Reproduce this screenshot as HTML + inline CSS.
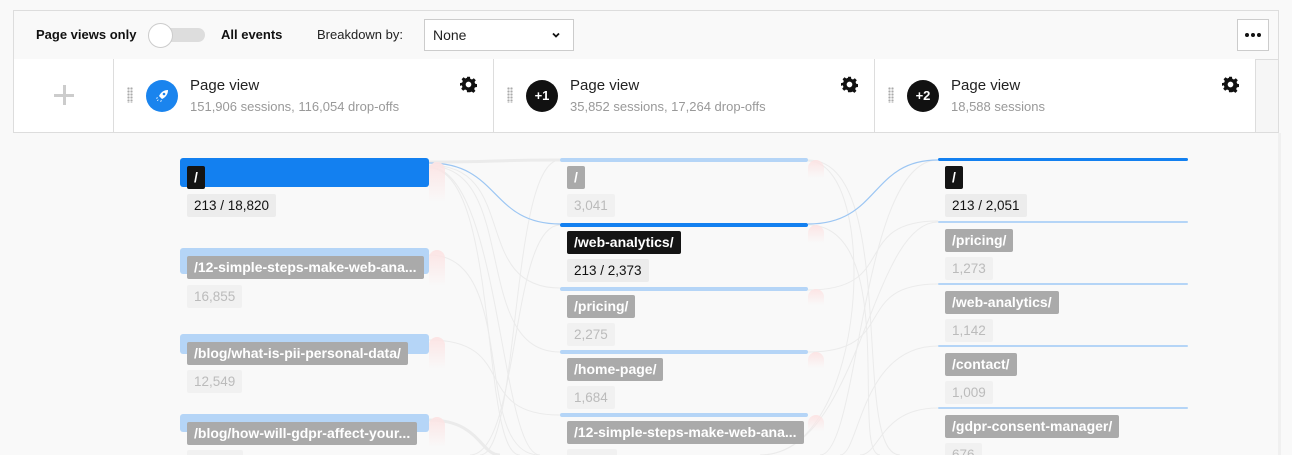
<!DOCTYPE html>
<html><head><meta charset="utf-8"><style>
*{margin:0;padding:0;box-sizing:border-box}
html,body{width:1292px;height:455px;overflow:hidden}
body{background:#f9f9f9;font-family:"Liberation Sans",sans-serif;position:relative}
.a{position:absolute}
.bar{position:absolute;border-radius:3px}
.lbl{position:absolute;height:23px;line-height:23px;padding:0 7px;border-radius:2px;font-size:14px;font-weight:bold;color:#fff;background:#aaa;white-space:nowrap}
.blk{background:#141414}
.cnt{position:absolute;height:23px;line-height:23px;padding:0 7px;font-size:13.5px;color:#bbb;background:#f1f1f1;border-radius:2px}
.cnt.d{color:#111;background:#ececec}
.red{position:absolute;width:16px;border-radius:8px 8px 0 0;background:linear-gradient(#fce4e4,rgba(250,240,240,0))}
.cell{position:absolute;top:59px;height:73px;background:#fff;border-right:1px solid #ddd}
.t{position:absolute;font-size:15px;color:#222}
.s{position:absolute;font-size:13px;color:#999}
.grip{position:absolute;width:6px;height:16px;background:radial-gradient(circle,#aaa 1px,transparent 1.3px) 0 0/3px 3px}
.gear{position:absolute;width:17px;height:17px}
.circ{position:absolute;width:32px;height:32px;border-radius:50%;background:#111;color:#fff;font-size:13px;font-weight:bold;text-align:center;line-height:32px}
</style></head><body>
<div class="a" style="left:13px;top:10px;width:1266px;height:123px;border:1px solid #ddd;background:#f9f9f9"></div>
<div class="a" style="left:36px;top:27px;font-size:13px;font-weight:bold;color:#111">Page views only</div>
<div class="a" style="left:150px;top:28px;width:55px;height:14px;border-radius:7px;background:#ddd"></div>
<div class="a" style="left:148px;top:23px;width:25px;height:25px;border-radius:50%;background:#fff;border:1px solid #ccc"></div>
<div class="a" style="left:221px;top:27px;font-size:13px;font-weight:bold;color:#111">All events</div>
<div class="a" style="left:317px;top:27px;font-size:13px;color:#222">Breakdown by:</div>
<div class="a" style="left:424px;top:19px;width:150px;height:32px;border:1px solid #ccc;background:#fff;font-size:14px;color:#222;line-height:30px;padding-left:8px">None</div>
<svg class="a" style="left:552px;top:31px" width="8" height="8" viewBox="0 0 8 8"><path d="M1 2.5L4 5.5 7 2.5" fill="none" stroke="#111" stroke-width="1.8"/></svg>
<div class="a" style="left:1237px;top:19px;width:32px;height:32px;border:1px solid #ccc;background:#fff"></div>
<div class="a" style="left:1245px;top:33px;width:4px;height:4px;border-radius:50%;background:#111"></div>
<div class="a" style="left:1251px;top:33px;width:4px;height:4px;border-radius:50%;background:#111"></div>
<div class="a" style="left:1257px;top:33px;width:4px;height:4px;border-radius:50%;background:#111"></div>
<div class="a" style="left:14px;top:59px;width:1265px;height:1px;background:#ddd"></div>
<div class="cell" style="left:14px;width:100px"><div class="a" style="left:40px;top:35px;width:20px;height:3px;background:#ccc"></div><div class="a" style="left:48.5px;top:26px;width:3px;height:20px;background:#ccc"></div></div>
<div class="cell" style="left:114px;width:380px"></div>
<div class="cell" style="left:494px;width:381px"></div>
<div class="cell" style="left:875px;width:381px"></div>
<div class="a" style="left:1256px;top:60px;width:22px;height:72px;background:#f6f6f6"></div>
<div class="a" style="left:1278px;top:133px;width:3px;height:322px;background:#f0f0f0"></div>

<div class="grip" style="left:127px;top:87px"></div>
<div class="a" style="left:146px;top:80px;width:32px;height:32px;border-radius:50%;background:#1a84ee"></div>
<svg class="a" style="left:152px;top:86px" width="20" height="20" viewBox="0 0 20 20"><path d="M16 4c-4 0-7 2-9 6l3 3c4-2 6-5 6-9z M6 11l-2 1 1 1z M9 14l-1 2 2-1z M5 15c0-1 1-2 2-1-1 0-1 1-2 1z" fill="#fff"/><circle cx="12" cy="8" r="1.3" fill="#1a84ee"/></svg>
<div class="t" style="left:190px;top:77px">Page view</div>
<div class="s" style="left:190px;top:99px">151,906 sessions, 116,054 drop-offs</div>
<div class="grip" style="left:507px;top:87px"></div>
<div class="circ" style="left:526px;top:80px">+1</div>
<div class="t" style="left:570px;top:77px">Page view</div>
<div class="s" style="left:570px;top:99px">35,852 sessions, 17,264 drop-offs</div>
<div class="grip" style="left:888px;top:87px"></div>
<div class="circ" style="left:907px;top:80px">+2</div>
<div class="t" style="left:951px;top:77px">Page view</div>
<div class="s" style="left:951px;top:99px">18,588 sessions</div>
<svg class="gear" style="left:460px;top:76px" viewBox="0 0 24 24"><path fill="#111" d="M10 1h4l.6 3 2.4 1 2.5-1.8 2.8 2.8L20.5 8.5l1 2.4 2.5.6v4l-3 .6-1 2.4 1.8 2.5-2.8 2.8-2.5-1.8-2.4 1L14 23h-4l-.6-3-2.4-1-2.5 1.8-2.8-2.8 1.8-2.5-1-2.4L0 14v-4l3-.6 1-2.4-1.8-2.5 2.8-2.8L7.5 3.5 9.9 2.5z"/><circle cx="12" cy="12" r="4" fill="#fff"/></svg>
<svg class="gear" style="left:841px;top:76px" viewBox="0 0 24 24"><path fill="#111" d="M10 1h4l.6 3 2.4 1 2.5-1.8 2.8 2.8L20.5 8.5l1 2.4 2.5.6v4l-3 .6-1 2.4 1.8 2.5-2.8 2.8-2.5-1.8-2.4 1L14 23h-4l-.6-3-2.4-1-2.5 1.8-2.8-2.8 1.8-2.5-1-2.4L0 14v-4l3-.6 1-2.4-1.8-2.5 2.8-2.8L7.5 3.5 9.9 2.5z"/><circle cx="12" cy="12" r="4" fill="#fff"/></svg>
<svg class="gear" style="left:1222px;top:76px" viewBox="0 0 24 24"><path fill="#111" d="M10 1h4l.6 3 2.4 1 2.5-1.8 2.8 2.8L20.5 8.5l1 2.4 2.5.6v4l-3 .6-1 2.4 1.8 2.5-2.8 2.8-2.5-1.8-2.4 1L14 23h-4l-.6-3-2.4-1-2.5 1.8-2.8-2.8 1.8-2.5-1-2.4L0 14v-4l3-.6 1-2.4-1.8-2.5 2.8-2.8L7.5 3.5 9.9 2.5z"/><circle cx="12" cy="12" r="4" fill="#fff"/></svg>

<svg class="a" style="left:0;top:0" width="1292" height="455">
<g fill="none" stroke="#ebebeb" stroke-width="1">
<path d="M429 162C500 162 490 160 560 160" stroke-width="3"/>
<path d="M429 165C520 165 470 288 560 288"/>
<path d="M429 166C520 166 470 352 560 352"/>
<path d="M429 168C500 168 480 455 520 455"/>
<path d="M429 167C500 167 500 455 540 455"/>
<path d="M429 255C520 255 470 455 540 455"/>
<path d="M429 340C520 340 470 415 560 415"/>
<path d="M429 420C480 420 480 455 500 455" stroke-width="3"/>
<path d="M560 160C510 160 520 455 480 455"/>
<path d="M560 225C510 225 520 455 470 455"/>
<path d="M808 160C900 160 850 455 900 455"/>
<path d="M808 225C900 225 850 455 880 455"/>
<path d="M808 290C900 290 850 221 938 221"/>
<path d="M808 352C900 352 850 284 938 284"/>
<path d="M938 160C860 160 860 455 820 455"/>
<path d="M938 346C860 346 860 455 840 455"/>
<path d="M938 408C880 408 880 455 860 455"/>
<path d="M808 161C880 161 870 455 760 455"/>
<path d="M938 222C870 222 860 455 760 455"/>
</g>
<path d="M429 163C500 163 490 224 560 224" fill="none" stroke="#9cc6f3" stroke-width="1.2"/>
<path d="M808 224C880 224 870 160 938 160" fill="none" stroke="#9cc6f3" stroke-width="1.2"/>
</svg>

<!-- col1 -->
<div class="bar" style="left:180px;top:158px;width:249px;height:29px;background:#1380f0"></div>
<div class="red" style="left:429px;top:162px;height:40px"></div>
<div class="lbl blk" style="left:187px;top:166px">/</div>
<div class="cnt d" style="left:187px;top:194px">213 / 18,820</div>
<div class="bar" style="left:180px;top:248px;width:249px;height:26px;background:#b5d5f7"></div>
<div class="red" style="left:429px;top:250px;height:36px"></div>
<div class="lbl" style="left:187px;top:256px">/12-simple-steps-make-web-ana...</div>
<div class="cnt" style="left:187px;top:285px">16,855</div>
<div class="bar" style="left:180px;top:334px;width:249px;height:20px;background:#b5d5f7"></div>
<div class="red" style="left:429px;top:337px;height:32px"></div>
<div class="lbl" style="left:187px;top:342px">/blog/what-is-pii-personal-data/</div>
<div class="cnt" style="left:187px;top:370px">12,549</div>
<div class="bar" style="left:180px;top:414px;width:249px;height:18px;background:#b5d5f7"></div>
<div class="red" style="left:429px;top:417px;height:30px"></div>
<div class="lbl" style="left:187px;top:422px">/blog/how-will-gdpr-affect-your...</div>
<div class="cnt" style="left:187px;top:450px;width:56px">&nbsp;</div>

<!-- col2 -->
<div class="bar" style="left:560px;top:158px;width:248px;height:4px;background:#b5d5f7"></div>
<div class="red" style="left:808px;top:160px;height:18px"></div>
<div class="lbl" style="left:567px;top:166px">/</div>
<div class="cnt" style="left:567px;top:194px">3,041</div>
<div class="bar" style="left:560px;top:223px;width:248px;height:4px;background:#1380f0"></div>
<div class="red" style="left:808px;top:225px;height:18px"></div>
<div class="lbl blk" style="left:567px;top:231px">/web-analytics/</div>
<div class="cnt d" style="left:567px;top:259px">213 / 2,373</div>
<div class="bar" style="left:560px;top:287px;width:248px;height:4px;background:#b5d5f7"></div>
<div class="red" style="left:808px;top:289px;height:16px"></div>
<div class="lbl" style="left:567px;top:295px">/pricing/</div>
<div class="cnt" style="left:567px;top:323px">2,275</div>
<div class="bar" style="left:560px;top:350px;width:248px;height:4px;background:#b5d5f7"></div>
<div class="red" style="left:808px;top:352px;height:16px"></div>
<div class="lbl" style="left:567px;top:358px">/home-page/</div>
<div class="cnt" style="left:567px;top:386px">1,684</div>
<div class="bar" style="left:560px;top:413px;width:248px;height:4px;background:#b5d5f7"></div>
<div class="red" style="left:808px;top:415px;height:16px"></div>
<div class="lbl" style="left:567px;top:421px">/12-simple-steps-make-web-ana...</div>
<div class="cnt" style="left:567px;top:449px;width:50px">&nbsp;</div>

<!-- col3 -->
<div class="bar" style="left:938px;top:158px;width:250px;height:3px;background:#1380f0"></div>
<div class="lbl blk" style="left:945px;top:166px">/</div>
<div class="cnt d" style="left:945px;top:194px">213 / 2,051</div>
<div class="bar" style="left:938px;top:221px;width:250px;height:2px;background:#b5d5f7"></div>
<div class="lbl" style="left:945px;top:229px">/pricing/</div>
<div class="cnt" style="left:945px;top:257px">1,273</div>
<div class="bar" style="left:938px;top:283px;width:250px;height:2px;background:#b5d5f7"></div>
<div class="lbl" style="left:945px;top:291px">/web-analytics/</div>
<div class="cnt" style="left:945px;top:319px">1,142</div>
<div class="bar" style="left:938px;top:345px;width:250px;height:2px;background:#b5d5f7"></div>
<div class="lbl" style="left:945px;top:353px">/contact/</div>
<div class="cnt" style="left:945px;top:381px">1,009</div>
<div class="bar" style="left:938px;top:407px;width:250px;height:2px;background:#b5d5f7"></div>
<div class="lbl" style="left:945px;top:415px">/gdpr-consent-manager/</div>
<div class="cnt" style="left:945px;top:443px">676</div>
</body></html>
